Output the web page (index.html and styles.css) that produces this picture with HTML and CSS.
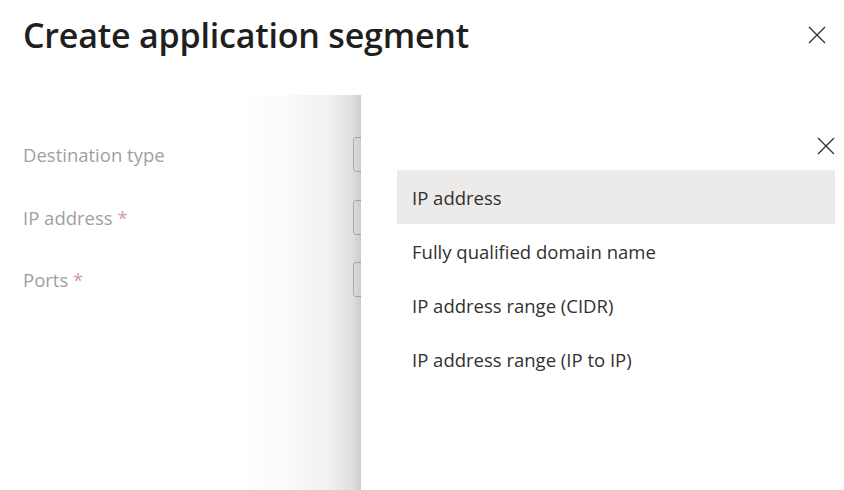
FILE: index.html
```html
<!DOCTYPE html>
<html lang="en">
<head>
    <meta charset="UTF-8">
    <meta name="viewport" content="width=device-width, initial-scale=1.0">
    <title>Create application segment</title>
    <link rel="stylesheet" href="styles.css">
</head>
<body>

    <div class="page">
        <div class="header">
            <h1>Create application segment</h1>
            <button class="close" aria-label="Close">
                <svg width="18" height="18" viewBox="0 0 18 18"><path d="M1 1L17 17M17 1L1 17" stroke="#323130" stroke-width="1.3" fill="none"/></svg>
            </button>
        </div>

        <div class="form">
            <label for="destType">Destination type</label>
            <input type="text" id="destType">

            <label for="ipAddress">IP address <span class="req">*</span></label>
            <input type="text" id="ipAddress">

            <label for="ports">Ports <span class="req">*</span></label>
            <input type="text" id="ports">
        </div>

        <div class="panel">
            <div class="panel-top">
                <button class="close" aria-label="Close">
                    <svg width="18" height="18" viewBox="0 0 18 18"><path d="M1 1L17 17M17 1L1 17" stroke="#323130" stroke-width="1.3" fill="none"/></svg>
                </button>
            </div>
            <ul class="options">
                <li class="selected">IP address</li>
                <li>Fully qualified domain name</li>
                <li>IP address range (CIDR)</li>
                <li>IP address range (IP to IP)</li>
            </ul>
        </div>
    </div>

</body>
</html>
```

FILE: styles.css
```css
body {
    margin: 0;
    font-family: "Open Sans", Arial, sans-serif;
    background-color: #fff;
    color: #323130;
}
.page {
    position: relative;
    width: 844px;
    height: 490px;
    overflow: hidden;
}
.header {
    display: flex;
    align-items: center;
    justify-content: space-between;
    padding: 11px 18px 0 23px;
    height: 47px;
}
h1 {
    margin: 0;
    font-size: 34px;
    font-weight: 600;
    letter-spacing: -0.2px;
    color: #201f1e;
}
.close {
    background: none;
    border: none;
    padding: 0;
    width: 18px;
    height: 18px;
    cursor: pointer;
}
.close svg {
    display: block;
}
.form {
    display: grid;
    grid-template-columns: 330px 1fr;
    row-gap: 27.5px;
    align-items: center;
    padding: 79px 0 0 23px;
}
label {
    font-size: 18.5px;
    color: #a19f9d;
}
.req {
    color: #d39ba5;
}
input[type="text"] {
    width: 300px;
    height: 35px;
    border: 1px solid #c8c6c4;
    border-radius: 3px;
    box-sizing: border-box;
}
.panel {
    position: absolute;
    left: 361px;
    top: 95px;
    right: 0;
    bottom: 0;
    background-color: #fff;
}
.panel::before {
    content: "";
    position: absolute;
    top: 0;
    bottom: 0;
    left: -120px;
    width: 120px;
    background: linear-gradient(to right, rgba(0, 0, 0, 0) 0%, rgba(0, 0, 0, 0.02) 40%, rgba(0, 0, 0, 0.06) 75%, rgba(0, 0, 0, 0.12) 92%, rgba(0, 0, 0, 0.2) 100%);
}
.panel-top {
    display: flex;
    justify-content: flex-end;
    padding: 42px 9px 0 0;
    height: 33px;
}
.options {
    list-style: none;
    margin: 0 9px 0 36px;
    padding: 0;
}
.options li {
    height: 53px;
    padding: 1px 0 0 15px;
    line-height: 53px;
    font-size: 18.5px;
    color: #323130;
}
.options li.selected {
    background-color: #edebe9;
}
```
